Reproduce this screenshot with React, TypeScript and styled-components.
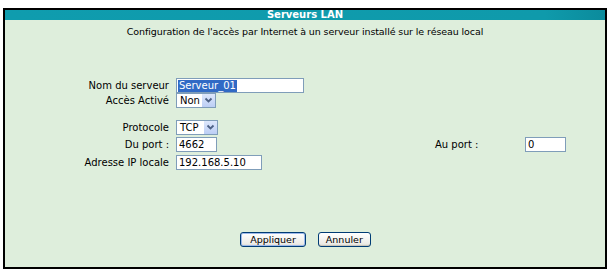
import styled, { createGlobalStyle } from "styled-components";

const GlobalStyle = createGlobalStyle`
  html, body {
    margin: 0;
    padding: 0;
    background: #ffffff;
  }
  body {
    font-family: "DejaVu Sans", Verdana, sans-serif;
    font-size: 10px;
    color: #000000;
  }
`;

const ChevronIcon = () => (
  <svg width="9" height="7" viewBox="0 0 9 7">
    <path d="M1.5 1.5 L4.5 4.5 L7.5 1.5" fill="none" stroke="#4d6185" strokeWidth="1.8" />
  </svg>
);

type SelectProps = { value: string; width: number };

const FakeSelect = ({ value, width }: SelectProps) => (
  <SelectBox $width={width}>
    <SelectValue>{value}</SelectValue>
    <SelectButton>
      <ChevronIcon />
    </SelectButton>
  </SelectBox>
);

const App = () => {
  return (
    <Page>
      <GlobalStyle />
      <Frame>
        <Header>Serveurs LAN</Header>
        <Subtitle>Configuration de l'accès par Internet à un serveur installé sur le réseau local</Subtitle>
        <Form>
          <Label $row={1}>Nom du serveur</Label>
          <Field $row={1}>
            <SelectedField $width={128}>
              <Highlight>Serveur_01</Highlight>
            </SelectedField>
          </Field>

          <Label $row={2}>Accès Activé</Label>
          <Field $row={2}>
            <FakeSelect value="Non" width={40} />
          </Field>

          <Label $row={4}>Protocole</Label>
          <Field $row={4}>
            <FakeSelect value="TCP" width={42} />
          </Field>

          <Label $row={5}>Du port :</Label>
          <Field $row={5}>
            <TextInput $width={41} defaultValue="4662" readOnly />
          </Field>
          <SideLabel $row={5}>Au port :</SideLabel>
          <SideField $row={5}>
            <TextInput $width={41} defaultValue="0" readOnly />
          </SideField>

          <Label $row={6}>Adresse IP locale</Label>
          <Field $row={6}>
            <TextInput $width={86} defaultValue="192.168.5.10" readOnly />
          </Field>
        </Form>
        <Actions>
          <Button $primary>Appliquer</Button>
          <Button>Annuler</Button>
        </Actions>
      </Frame>
    </Page>
  );
};

const Page = styled.div`
  padding: 8px 0 0 3px;
`;

const Frame = styled.div`
  width: 600px;
  height: 257px;
  border: 2px solid #000000;
  background: #deeedc;
  display: flex;
  flex-direction: column;
`;

const Header = styled.div`
  height: 10px;
  line-height: 10px;
  background: linear-gradient(to right, #0f9cae 0%, #0f9aab 90%, #0b8b9c 100%);
  color: #ffffff;
  font-weight: bold;
  font-size: 10px;
  text-align: center;
`;

const Subtitle = styled.div`
  margin-top: 6px;
  text-align: center;
  line-height: 12px;
  font-size: 9.5px;
  letter-spacing: -0.1px;
`;

const Form = styled.div`
  margin-top: 40px;
  display: grid;
  grid-template-columns: 164px 252px 83px 1fr;
  grid-template-rows: 15px 15px 11px 17px 17px 18px;
  column-gap: 7px;
`;

const Label = styled.div<{ $row: number }>`
  grid-row: ${({ $row }) => $row};
  grid-column: 1;
  text-align: right;
  display: flex;
  align-items: center;
  justify-content: flex-end;
`;

const Field = styled.div<{ $row: number }>`
  grid-row: ${({ $row }) => $row};
  grid-column: 2;
  display: flex;
  align-items: center;
`;

const SideLabel = styled.div<{ $row: number }>`
  grid-row: ${({ $row }) => $row};
  grid-column: 3;
  display: flex;
  align-items: center;
`;

const SideField = styled(Field)`
  grid-column: 4;
`;

const TextInput = styled.input<{ $width: number }>`
  box-sizing: border-box;
  width: ${({ $width }) => $width}px;
  height: 15px;
  margin: 0;
  padding: 0 2px;
  border: 1px solid #7f9db9;
  background: #ffffff;
  font-family: "DejaVu Sans", Verdana, sans-serif;
  font-size: 10px;
  color: #000000;
  outline: none;
`;

const SelectedField = styled.div<{ $width: number }>`
  box-sizing: border-box;
  width: ${({ $width }) => $width}px;
  height: 15px;
  border: 1px solid #7f9db9;
  background: #ffffff;
  padding: 0 1px;
  display: flex;
  align-items: center;
`;

const Highlight = styled.span`
  background: #316ac5;
  color: #ffffff;
  line-height: 12px;
  padding: 0 1px;
`;

const SelectBox = styled.div<{ $width: number }>`
  box-sizing: border-box;
  width: ${({ $width }) => $width}px;
  height: 15px;
  border: 1px solid #7f9db9;
  background: #ffffff;
  display: flex;
  align-items: center;
  justify-content: space-between;
`;

const SelectValue = styled.span`
  padding-left: 3px;
`;

const SelectButton = styled.span`
  width: 13px;
  height: 13px;
  background: linear-gradient(to bottom, #dde7fb, #bccef5);
  border-left: 1px solid #ffffff;
  display: flex;
  align-items: center;
  justify-content: center;
`;

const Actions = styled.div`
  margin-top: auto;
  margin-bottom: 20px;
  display: flex;
  justify-content: center;
  gap: 12px;
  padding-left: 1px;
`;

const Button = styled.button<{ $primary?: boolean }>`
  box-sizing: border-box;
  height: 15px;
  padding: ${({ $primary }) => ($primary ? "0 9px" : "0 7px")};
  font-family: "DejaVu Sans", Verdana, sans-serif;
  font-size: 9.5px;
  line-height: 11px;
  color: #000000;
  border: 1px solid #003c74;
  border-radius: 3px;
  background: linear-gradient(to bottom, #ffffff, #ecebe6 85%, #d6d0c5);
  box-shadow: ${({ $primary }) =>
    $primary ? "inset 0 0 0 1px #9db9eb" : "inset 0 -1px 0 #c9c5bb"};
`;

export default App;
